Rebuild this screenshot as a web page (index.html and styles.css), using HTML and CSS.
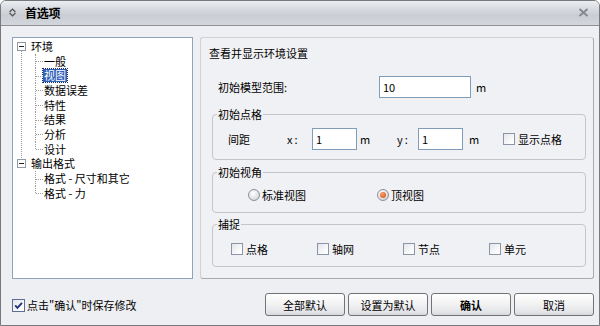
FILE: index.html
```html
<!DOCTYPE html>
<html lang="zh-CN">
<head>
<meta charset="utf-8">
<title>首选项</title>
<link rel="stylesheet" href="styles.css">
</head>
<body>
<div class="window">
  <div class="titlebar">
    <svg class="title-icon" width="7" height="9" viewBox="0 0 7 9"><path d="M0.6 4 L3.5 1.1 L6.4 4 M0.6 5 L3.5 7.9 L6.4 5" fill="none" stroke="#555" stroke-width="1.3"/></svg>
    <span class="title-text">首选项</span>
    <svg class="close" width="11" height="9" viewBox="0 0 11 9"><path d="M1.5 1 L9.5 8 M9.5 1 L1.5 8" fill="none" stroke="#85878c" stroke-width="1.8"/></svg>
  </div>
  <div class="body">
    <div class="main">
      <div class="tree-panel">
        <ul class="tree">
          <li class="root first">
            <div class="row"><span class="box"></span><span class="label">环境</span></div>
            <ul class="children">
              <li class="row child"><span class="label">一般</span></li>
              <li class="row child"><span class="label selected">视图</span></li>
              <li class="row child"><span class="label">数据误差</span></li>
              <li class="row child"><span class="label">特性</span></li>
              <li class="row child"><span class="label">结果</span></li>
              <li class="row child"><span class="label">分析</span></li>
              <li class="row child last"><span class="label">设计</span></li>
            </ul>
          </li>
          <li class="root">
            <div class="row"><span class="box"></span><span class="label">输出格式</span></div>
            <ul class="children">
              <li class="row child"><span class="label">格式 - 尺寸和其它</span></li>
              <li class="row child last"><span class="label">格式 - 力</span></li>
            </ul>
          </li>
        </ul>
      </div>
      <div class="settings">
        <div class="heading">查看并显示环境设置</div>
        <div class="range-row">
          <span class="range-label">初始模型范围:</span>
          <span class="field wide">10</span>
          <span class="unit">m</span>
        </div>
        <fieldset class="group grid-group">
          <legend>初始点格</legend>
          <div class="grid-row">
            <span class="spacing-label">间距</span>
            <span class="axis axis-x">x:</span>
            <span class="field small">1</span>
            <span class="unit unit-x">m</span>
            <span class="axis axis-y">y:</span>
            <span class="field small">1</span>
            <span class="unit unit-y">m</span>
            <span class="check"></span>
            <span class="check-label">显示点格</span>
          </div>
        </fieldset>
        <fieldset class="group view-group">
          <legend>初始视角</legend>
          <div class="option-row radios">
            <span class="option radio-opt"><span class="radio"></span><span class="opt-label">标准视图</span></span>
            <span class="option radio-opt"><span class="radio on"></span><span class="opt-label">顶视图</span></span>
          </div>
        </fieldset>
        <fieldset class="group snap-group">
          <legend>捕捉</legend>
          <div class="option-row checks">
            <span class="option check-opt"><span class="check"></span><span class="opt-label">点格</span></span>
            <span class="option check-opt"><span class="check"></span><span class="opt-label">轴网</span></span>
            <span class="option check-opt"><span class="check"></span><span class="opt-label">节点</span></span>
            <span class="option check-opt"><span class="check"></span><span class="opt-label">单元</span></span>
          </div>
        </fieldset>
      </div>
    </div>
    <div class="footer">
      <div class="save-opt">
        <span class="check checked"><svg width="11" height="11" viewBox="0 0 11 11"><path d="M2.2 5.4 L4.4 7.8 L9 2.8" fill="none" stroke="#24337c" stroke-width="1.9"/></svg></span>
        <span class="save-label">点击"确认"时保存修改</span>
      </div>
      <div class="buttons">
        <button class="btn">全部默认</button>
        <button class="btn">设置为默认</button>
        <button class="btn primary">确认</button>
        <button class="btn">取消</button>
      </div>
    </div>
  </div>
</div>
</body>
</html>
```

FILE: styles.css
```css
* { box-sizing: border-box; }
html, body { margin: 0; padding: 0; }
body {
  width: 600px;
  height: 326px;
  background: #ffffff;
  font-family: "Noto Sans CJK SC", "Liberation Sans", sans-serif;
  font-size: 11px;
  color: #000;
}
.window {
  width: 600px;
  height: 326px;
  border: 1px solid #77797d;
  border-radius: 6px 6px 0 0;
  background: #eeeff2;
  display: flex;
  flex-direction: column;
  overflow: hidden;
}
.titlebar {
  flex: 0 0 25px;
  height: 25px;
  display: flex;
  align-items: center;
  padding: 0 0 1px 8px;
  background: linear-gradient(to bottom, #eceef1 0%, #d6d9de 35%, #cacdd4 60%, #d3d6db 100%);
  border-bottom: 1px solid #8e9095;
}
.title-icon { flex: 0 0 auto; margin-right: 9px; }
.title-text {
  font-size: 12px;
  font-weight: bold;
  line-height: 14px;
  letter-spacing: -0.3px;
}
.close { margin-left: auto; margin-right: 10px; }
.body {
  flex: 1;
  display: flex;
  flex-direction: column;
  padding: 11px 5px 0 11px;
}
.main {
  display: flex;
  gap: 7px;
  height: 242px;
}
.tree-panel {
  flex: 0 0 181px;
  background: #fff;
  border: 1px solid #8fa3bd;
  padding-top: 1px;
}
.tree, .children {
  list-style: none;
  margin: 0;
  padding: 0;
}
.root { position: relative; }
.row {
  height: 14.7px;
  display: flex;
  align-items: center;
  line-height: 13px;
  white-space: nowrap;
  position: relative;
}
.root > .row { padding-left: 4px; }
.box {
  width: 9px;
  height: 9px;
  border: 1px solid #8f9aa3;
  background: #fff;
  margin-right: 4px;
  position: relative;
  flex: 0 0 auto;
}
.box::after {
  content: "";
  position: absolute;
  left: 1px;
  top: 3px;
  width: 5px;
  height: 1px;
  background: #222;
}
.root.first::before {
  content: "";
  position: absolute;
  left: 8px;
  top: 12px;
  bottom: -3px;
  border-left: 1px dotted #9a9a9a;
}
.child { padding-left: 30px; }
.child::before {
  content: "";
  position: absolute;
  left: 22px;
  top: 0;
  bottom: 0;
  border-left: 1px dotted #9a9a9a;
}
.child.last::before { bottom: 50%; }
.child::after {
  content: "";
  position: absolute;
  left: 23px;
  top: 50%;
  width: 7px;
  border-top: 1px dotted #9a9a9a;
}
.label { padding: 0 1px; }
.label.selected {
  background: #2f5fb8;
  color: #fff;
  outline: 1px dotted #1a2f60;
}
.settings {
  flex: 1;
  border: 1px solid #a9abb1;
  border-left-color: #cfd1d6;
  border-top-color: #cfd1d6;
  border-radius: 3px;
  background: #f0f1f4;
  display: flex;
  flex-direction: column;
}
.heading {
  padding: 8px 0 0 8px;
  line-height: 14px;
}
.range-row {
  margin-top: 16px;
  height: 22px;
  display: flex;
  align-items: center;
  padding-left: 17px;
}
.range-label { width: 161px; }
.field {
  height: 22px;
  border: 1px solid #7f9db9;
  background: #fff;
  padding: 0 3px;
  display: flex;
  align-items: center;
  line-height: 14px;
}
.field.wide { width: 92px; }
.field.small { width: 45px; }
.unit { margin-left: 5px; }
.group {
  margin: 0 7px 0 11px;
  border: 1px solid #c3c5ca;
  border-radius: 4px;
  padding: 0;
  min-width: 0;
}
.group legend {
  margin-left: 4px;
  padding: 0 1px;
  line-height: 14px;
}
.grid-group { margin-top: 9px; padding: 7px 0 9px 0; }
.view-group { margin-top: 5px; padding: 8px 0 9px 0; }
.snap-group { margin-top: 4px; padding: 10px 0 9px 0; }
.grid-row {
  height: 22px;
  display: flex;
  align-items: center;
  padding-left: 15px;
}
.spacing-label { width: 59px; }
.axis { letter-spacing: 2px; }
.axis-x { width: 25px; }
.axis-y { width: 21px; }
.unit-x { margin-left: 3px; width: 37px; }
.unit-y { margin-left: 6px; width: 34px; }
.check {
  width: 12px;
  height: 12px;
  border: 1px solid #8c95a6;
  background: linear-gradient(135deg, #e4e5ea 0%, #fbfbfc 70%, #ffffff 100%);
  flex: 0 0 auto;
  display: flex;
  align-items: center;
  justify-content: center;
}
.check-label { margin-left: 3px; }
.option-row {
  height: 16px;
  display: flex;
  align-items: center;
}
.radios { padding-left: 35px; }
.checks { padding-left: 18px; }
.option { display: flex; align-items: center; }
.radio-opt { width: 129px; }
.check-opt { width: 86px; }
.check-opt .opt-label { margin-left: 3px; }
.radio {
  width: 12px;
  height: 12px;
  border-radius: 50%;
  border: 1px solid #8e9096;
  background: radial-gradient(circle at 40% 35%, #ffffff 0%, #e0e1e5 60%, #b9bbc1 100%);
  margin-right: 2px;
  flex: 0 0 auto;
  position: relative;
}
.radio.on::after {
  content: "";
  position: absolute;
  left: 2px;
  top: 2px;
  width: 6px;
  height: 6px;
  border-radius: 50%;
  background: radial-gradient(circle at 40% 35%, #f7a06a 0%, #e2622a 70%, #c94a18 100%);
}
.footer {
  margin-top: 14px;
  display: flex;
  align-items: center;
  justify-content: space-between;
}
.save-opt {
  display: flex;
  align-items: center;
  margin-top: 1px;
}
.check.checked {
  width: 13px;
  height: 13px;
  border-color: #5a6f93;
}
.save-label { margin-left: 2px; }
.buttons {
  display: flex;
  gap: 3px;
}
.btn {
  width: 80px;
  height: 23px;
  border: 1px solid #717377;
  border-radius: 3px;
  background: linear-gradient(to bottom, #ffffff 0%, #f3f3f4 45%, #e4e5e8 85%, #d6d7da 100%);
  font-family: "Noto Sans CJK SC", "Liberation Sans", sans-serif;
  font-size: 11px;
  color: #000;
  padding: 0;
  line-height: 14px;
}
.btn.primary { font-weight: bold; }
```
